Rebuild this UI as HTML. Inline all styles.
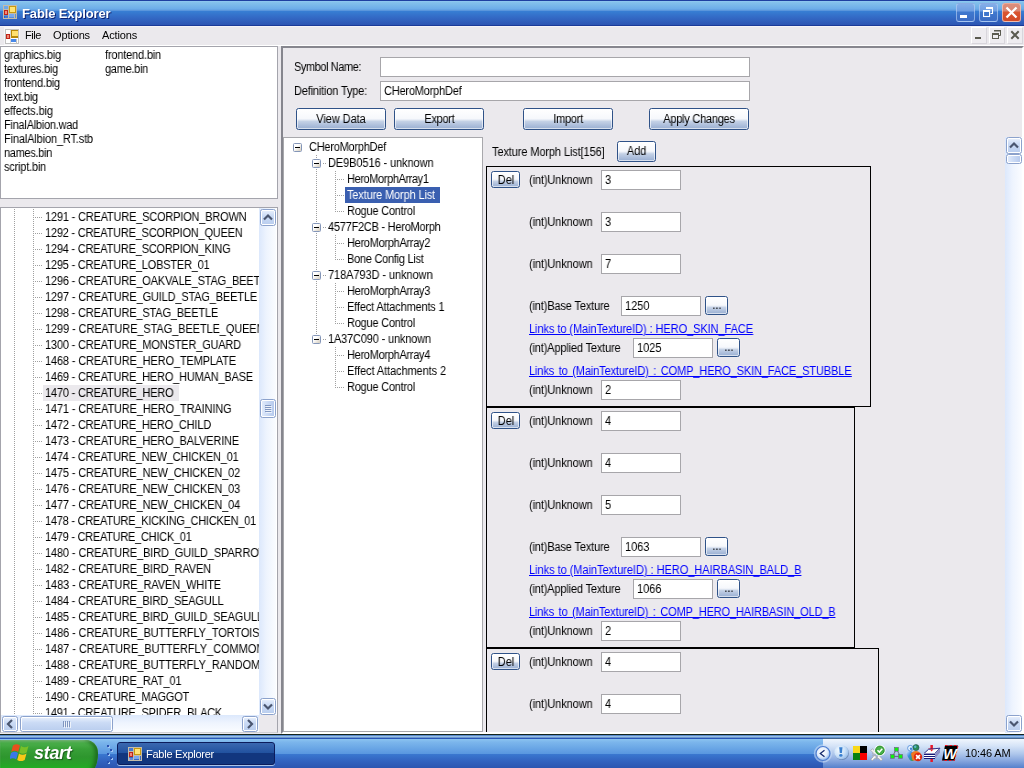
<!DOCTYPE html>
<html lang="en"><head><meta charset="utf-8"><title>Fable Explorer</title>
<style>
html,body{margin:0;padding:0}
body{width:1024px;height:768px;overflow:hidden;position:relative;background:#EBE9ED;font:12px "Liberation Sans",sans-serif;color:#000}
div,span,a{box-sizing:border-box}
.abs{position:absolute}
span{white-space:pre}
.s{display:inline-block;transform:scaleX(.9167);transform-origin:0 50%;letter-spacing:-0.22px;will-change:transform}
.s.c{transform-origin:50% 50%}
.t{font-size:11px;transform:none;letter-spacing:0}
#title{position:absolute;left:0;top:0;width:1024px;height:26px;background:linear-gradient(to bottom,#1E3FA0 0,#1E3FA0 1px,#93CBF1 1px,#85C2EC 2px,#6CACE8 9px,#5A96DC 10.5px,#377FD4 11px,#3368C4 18px,#2C55B2 25px,#1A3A98 25px,#1A3A98 26px)}
#title .cap{position:absolute;left:22px;top:1px;height:26px;font:bold 13px/26px "Liberation Sans",sans-serif;color:#fff;text-shadow:1px 1px 0 #0A1E6E;letter-spacing:0;transform:none;will-change:transform}
.tb{position:absolute;top:3px;width:19px;height:19px;border-radius:3px;border:1px solid rgba(190,214,246,.6);background:linear-gradient(to bottom,#84AEE8 0,#6E9EE2 7px,#3F78CE 8px,#3C6CC4 100%)}
.tb.close{background:linear-gradient(to bottom,#DC8E7C 0,#D98672 7px,#DA5530 8px,#D24A26 100%);border-color:rgba(246,206,196,.7)}
.tb svg,.mb svg{position:absolute;left:0;top:0}
#menu{position:absolute;left:0;top:26px;width:1024px;height:20px;background:#EBE9ED;border-top:1px solid #F5F3F7;border-bottom:1px solid #fff}
#menu span{position:absolute;top:-1px;height:18px;line-height:18px}
.mb{position:absolute;top:27px;width:16px;height:17px;border:1px solid #fff;border-right-color:#D8D6DC;border-bottom-color:#D8D6DC;background:#EEECF0}
#lv{position:absolute;left:0;top:46px;width:278px;height:153px;background:#fff;border:1px solid #A4A4AC}
#lv span{position:absolute;height:14px;line-height:14px}
#tv{position:absolute;left:0;top:207px;width:278px;height:526px;background:#fff;border:1px solid #A4A4AC;border-bottom-color:#D0D0D4;overflow:hidden}
.row{position:absolute;left:44px;height:16px;line-height:16px}
.hd{position:absolute;height:1px;background-image:linear-gradient(to right,#A0A0A0 50%,transparent 50%);background-size:2px 1px}
.vd{position:absolute;width:1px;background-image:linear-gradient(to bottom,#A0A0A0 50%,transparent 50%);background-size:1px 2px}
.sbv{position:absolute;background:linear-gradient(to right,#DCE8FC 0,#EEF4FE 45%,#FAFCFF 100%)}
.sbh{position:absolute;background:linear-gradient(to bottom,#DCE8FC 0,#EEF4FE 45%,#FAFCFF 100%)}
.sbb{position:absolute;border:1px solid #8CA2CC;border-radius:2.5px;background:linear-gradient(to bottom,#EAF1FD 0,#CBDBF5 40%,#B9CDEE 100%);box-shadow:inset 0 0 0 1px #fff}
.sbb.v{background:linear-gradient(to right,#E4EDFC 0,#C9D9F4 50%,#B4C8EC 100%)}
.sbb svg{position:absolute;left:0;top:0}
#mdi{position:absolute;left:281px;top:46px;width:743px;height:688px;border-left:2px solid #86868E;border-top:2px solid #86868E;border-right:2px solid #fff;border-bottom:2px solid #fff;background:#EBE9ED}
.tx{position:absolute;background:#fff;border:1px solid #A7A6AA;height:20px;line-height:18px;padding-left:3px}
.btn{position:absolute;border:1px solid #2F5288;border-radius:2.5px;background:linear-gradient(to bottom,#fff 0,#F6F8FC 48%,#E4EAF4 54%,#C4D1E6 62%,#98AED2 100%);text-align:center;box-shadow:inset 0 0 0 1px rgba(255,255,255,.6), 0 0 1px rgba(255,255,255,.8)}
.lbl{position:absolute;height:16px;line-height:16px}
.lnk{position:absolute;height:16px;line-height:16px;color:#0000FF;text-decoration:underline}
.grp{position:absolute;border:1px solid #000;height:241px}
#t2{position:absolute;left:283px;top:137px;width:200px;height:595px;background:#fff;border:1px solid #A8A8AC}
#t2 span{position:absolute;height:16px;line-height:16px}
.pm{position:absolute;width:9px;height:9px;border:1px solid #8496B8;background:linear-gradient(135deg,#fff 35%,#D4CCBC);border-radius:1.5px}
.pm:after{content:"";position:absolute;left:1px;top:3px;width:5px;height:1px;background:#000}
#task{position:absolute;left:0;top:738px;width:1024px;height:30px;background:linear-gradient(to bottom,#2A55B8 0,#2A55B8 1px,#8CC4F0 1px,#7CB6EC 4px,#5A98E0 15.500px,#3A78D0 16px,#3263C0 23px,#2C55B0 30px)}
</style></head>
<body>
<div id="title">
<svg class="abs" style="left:3px;top:5px" width="14" height="14" viewBox="0 0 14 14"><rect x="0" y="0" width="14" height="14" fill="#C4BCA8"></rect><rect x="1" y="1" width="12" height="12" fill="#5A8FD8"></rect><rect x="1" y="1" width="4" height="3" fill="#6FA8E8"></rect><rect x="1" y="5" width="4" height="5" fill="#C02418"></rect><rect x="2" y="6" width="2" height="3" fill="#F08878"></rect><rect x="6" y="1" width="7" height="7" fill="#C89A10"></rect><rect x="7" y="2" width="5" height="5" fill="#FFE478"></rect><rect x="5" y="0" width="1" height="14" fill="#C4BCA8"></rect><rect x="0" y="4" width="5" height="1" fill="#C4BCA8"></rect><rect x="6" y="9" width="5" height="3" fill="#78A8F0"></rect><rect x="5" y="8" width="9" height="1" fill="#C4BCA8"></rect><rect x="11" y="9" width="1" height="4" fill="#C4BCA8"></rect><rect x="1" y="11" width="1.500" height="2" fill="#2860C8"></rect><rect x="3.500" y="11" width="1" height="2" fill="#2860C8"></rect></svg>
<span class="cap" style="letter-spacing: -0.129px;">Fable Explorer</span>
<div class="tb" style="left:956px"><svg width="17" height="17"><rect x="3" y="11" width="7" height="3" fill="#fff"></rect></svg></div>
<div class="tb" style="left:979px"><svg width="17" height="17"><path d="M12.500 4v5.500h-2" fill="none" stroke="#fff" stroke-width="1.100"></path><rect x="6" y="3" width="7" height="2" fill="#fff"></rect><rect x="3.550" y="7" width="6" height="5.500" fill="none" stroke="#fff" stroke-width="1.100"></rect><rect x="3" y="6" width="7.100" height="2" fill="#fff"></rect></svg></div>
<div class="tb close" style="left:1002px"><svg width="17" height="17"><path d="M3.500 3.500l10 10M13.500 3.500l-10 10" stroke="#fff" stroke-width="2.300"></path></svg></div>
</div>
<div id="menu">
<div class="abs" style="left:4px;top:0;width:16px;height:18px;background:#F6F5F8"></div>
<svg class="abs" style="left:5px;top:2px" width="14" height="15" viewBox="0 0 14 15"><rect x="0" y="0" width="14" height="15" fill="#C0C0C0"></rect><rect x="1" y="1" width="12" height="13" fill="#fff"></rect><rect x="1" y="5" width="4" height="5" fill="#C02418"></rect><rect x="2" y="6" width="2" height="3" fill="#F08878"></rect><rect x="6" y="1" width="7" height="8" fill="#B88808"></rect><rect x="7" y="2" width="6" height="5" fill="#FFE070"></rect><rect x="6" y="10" width="5" height="3" fill="#4888E8"></rect><rect x="5" y="0" width="1" height="15" fill="#C0C0C0" opacity=".6"></rect><rect x="11" y="10" width="1" height="4" fill="#C0C0C0"></rect></svg>
<span class="s t" style="left: 25px; letter-spacing: -0.434px;">File</span>
<span class="s t" style="left: 53px; letter-spacing: -0.132px;">Options</span>
<span class="s t" style="left: 102px; letter-spacing: -0.154px;">Actions</span>
</div>
<div class="mb" style="left:971px"><svg width="14" height="15"><rect x="3" y="9" width="6" height="2" fill="#5A5A50"></rect></svg></div>
<div class="mb" style="left:989px"><svg width="14" height="15"><path d="M10.500 2.500v5h-2" fill="none" stroke="#5A5A50" stroke-width="1"></path><rect x="4" y="2" width="7" height="1.500" fill="#5A5A50"></rect><rect x="2.500" y="5.500" width="6" height="5" fill="none" stroke="#5A5A50" stroke-width="1"></rect><rect x="2" y="5" width="7" height="2" fill="#5A5A50"></rect></svg></div>
<div class="mb" style="left:1007px"><svg width="14" height="15"><path d="M3.300 3.300l7.400 7.400M10.700 3.300l-7.400 7.400" stroke="#5A5A50" stroke-width="2"></path></svg></div>
<div id="lv">
<span class="s" style="left: 3px; top: 1px; letter-spacing: -0.212px;">graphics.big</span>
<span class="s" style="left: 3px; top: 15px; letter-spacing: -0.262px;">textures.big</span>
<span class="s" style="left: 3px; top: 29px; letter-spacing: -0.192px;">frontend.big</span>
<span class="s" style="left: 3px; top: 43px; letter-spacing: -0.202px;">text.big</span>
<span class="s" style="left: 3px; top: 57px; letter-spacing: -0.094px;">effects.big</span>
<span class="s" style="left: 3px; top: 71px; letter-spacing: -0.266px;">FinalAlbion.wad</span>
<span class="s" style="left: 3px; top: 85px; letter-spacing: -0.153px;">FinalAlbion_RT.stb</span>
<span class="s" style="left: 3px; top: 99px; letter-spacing: -0.335px;">names.bin</span>
<span class="s" style="left: 3px; top: 113px; letter-spacing: -0.221px;">script.bin</span>
<span class="s" style="left: 104px; top: 1px; letter-spacing: -0.192px;">frontend.bin</span>
<span class="s" style="left: 104px; top: 15px; letter-spacing: -0.308px;">game.bin</span>
</div>
<div id="tv">
<div class="abs" style="left:0;top:0;width:258px;height:507px;overflow:hidden">
<div class="vd" style="left:13px;top:1px;height:506px"></div>
<div class="vd" style="left:32px;top:1px;height:506px"></div>
<div class="abs" style="left:42px;top:177px;width:136px;height:16px;background:#EBE9ED"></div>
<div class="hd" style="left:34px;top:9px;width:8px"></div>
<span class="s row" style="top: 1px; letter-spacing: -0.201px;">1291 - CREATURE_SCORPION_BROWN</span>
<div class="hd" style="left:34px;top:25px;width:8px"></div>
<span class="s row" style="top: 17px; letter-spacing: -0.236px;">1292 - CREATURE_SCORPION_QUEEN</span>
<div class="hd" style="left:34px;top:41px;width:8px"></div>
<span class="s row" style="top: 33px; letter-spacing: -0.235px;">1294 - CREATURE_SCORPION_KING</span>
<div class="hd" style="left:34px;top:57px;width:8px"></div>
<span class="s row" style="top: 49px; letter-spacing: -0.221px;">1295 - CREATURE_LOBSTER_01</span>
<div class="hd" style="left:34px;top:73px;width:8px"></div>
<span class="s row" style="top: 65px; letter-spacing: -0.189px;">1296 - CREATURE_OAKVALE_STAG_BEETLE</span>
<div class="hd" style="left:34px;top:89px;width:8px"></div>
<span class="s row" style="top: 81px; letter-spacing: -0.173px;">1297 - CREATURE_GUILD_STAG_BEETLE</span>
<div class="hd" style="left:34px;top:105px;width:8px"></div>
<span class="s row" style="top: 97px; letter-spacing: -0.182px;">1298 - CREATURE_STAG_BEETLE</span>
<div class="hd" style="left:34px;top:121px;width:8px"></div>
<span class="s row" style="top: 113px; letter-spacing: -0.112px;">1299 - CREATURE_STAG_BEETLE_QUEEN</span>
<div class="hd" style="left:34px;top:137px;width:8px"></div>
<span class="s row" style="top: 129px; letter-spacing: -0.185px;">1300 - CREATURE_MONSTER_GUARD</span>
<div class="hd" style="left:34px;top:153px;width:8px"></div>
<span class="s row" style="top: 145px; letter-spacing: -0.159px;">1468 - CREATURE_HERO_TEMPLATE</span>
<div class="hd" style="left:34px;top:169px;width:8px"></div>
<span class="s row" style="top: 161px; letter-spacing: -0.203px;">1469 - CREATURE_HERO_HUMAN_BASE</span>
<div class="hd" style="left:34px;top:185px;width:8px"></div>
<span class="s row" style="top: 177px; letter-spacing: -0.183px;">1470 - CREATURE_HERO</span>
<div class="hd" style="left:34px;top:201px;width:8px"></div>
<span class="s row" style="top: 193px; letter-spacing: -0.151px;">1471 - CREATURE_HERO_TRAINING</span>
<div class="hd" style="left:34px;top:217px;width:8px"></div>
<span class="s row" style="top: 209px; letter-spacing: -0.208px;">1472 - CREATURE_HERO_CHILD</span>
<div class="hd" style="left:34px;top:233px;width:8px"></div>
<span class="s row" style="top: 225px; letter-spacing: -0.178px;">1473 - CREATURE_HERO_BALVERINE</span>
<div class="hd" style="left:34px;top:249px;width:8px"></div>
<span class="s row" style="top: 241px; letter-spacing: -0.226px;">1474 - CREATURE_NEW_CHICKEN_01</span>
<div class="hd" style="left:34px;top:265px;width:8px"></div>
<span class="s row" style="top: 257px; letter-spacing: -0.171px;">1475 - CREATURE_NEW_CHICKEN_02</span>
<div class="hd" style="left:34px;top:281px;width:8px"></div>
<span class="s row" style="top: 273px; letter-spacing: -0.171px;">1476 - CREATURE_NEW_CHICKEN_03</span>
<div class="hd" style="left:34px;top:297px;width:8px"></div>
<span class="s row" style="top: 289px; letter-spacing: -0.171px;">1477 - CREATURE_NEW_CHICKEN_04</span>
<div class="hd" style="left:34px;top:313px;width:8px"></div>
<span class="s row" style="top: 305px; letter-spacing: -0.266px;">1478 - CREATURE_KICKING_CHICKEN_01</span>
<div class="hd" style="left:34px;top:329px;width:8px"></div>
<span class="s row" style="top: 321px; letter-spacing: -0.279px;">1479 - CREATURE_CHICK_01</span>
<div class="hd" style="left:34px;top:345px;width:8px"></div>
<span class="s row" style="top: 337px; letter-spacing: -0.137px;">1480 - CREATURE_BIRD_GUILD_SPARROW</span>
<div class="hd" style="left:34px;top:361px;width:8px"></div>
<span class="s row" style="top: 353px; letter-spacing: -0.149px;">1482 - CREATURE_BIRD_RAVEN</span>
<div class="hd" style="left:34px;top:377px;width:8px"></div>
<span class="s row" style="top: 369px; letter-spacing: -0.109px;">1483 - CREATURE_RAVEN_WHITE</span>
<div class="hd" style="left:34px;top:393px;width:8px"></div>
<span class="s row" style="top: 385px; letter-spacing: -0.184px;">1484 - CREATURE_BIRD_SEAGULL</span>
<div class="hd" style="left:34px;top:409px;width:8px"></div>
<span class="s row" style="top: 401px; letter-spacing: -0.16px;">1485 - CREATURE_BIRD_GUILD_SEAGULL</span>
<div class="hd" style="left:34px;top:425px;width:8px"></div>
<span class="s row" style="top: 417px; letter-spacing: -0.11px;">1486 - CREATURE_BUTTERFLY_TORTOISESHELL</span>
<div class="hd" style="left:34px;top:441px;width:8px"></div>
<span class="s row" style="top: 433px; letter-spacing: -0.06px;">1487 - CREATURE_BUTTERFLY_COMMON_BLUE</span>
<div class="hd" style="left:34px;top:457px;width:8px"></div>
<span class="s row" style="top: 449px; letter-spacing: -0.117px;">1488 - CREATURE_BUTTERFLY_RANDOM</span>
<div class="hd" style="left:34px;top:473px;width:8px"></div>
<span class="s row" style="top: 465px; letter-spacing: -0.154px;">1489 - CREATURE_RAT_01</span>
<div class="hd" style="left:34px;top:489px;width:8px"></div>
<span class="s row" style="top: 481px; letter-spacing: -0.245px;">1490 - CREATURE_MAGGOT</span>
<div class="hd" style="left:34px;top:505px;width:8px"></div>
<span class="s row" style="top: 497px; letter-spacing: -0.242px;">1491 - CREATURE_SPIDER_BLACK</span>
</div>
<div class="sbv" style="left:258px;top:0;width:17px;height:507px"></div>
<div class="sbb" style="left:259px;top:1px;width:16px;height:17px"><svg width="14" height="15"><path d="M3.0 9.5l4-4 4 4" fill="none" stroke="#4A5670" stroke-width="2.200"></path></svg></div>
<div class="sbb" style="left:259px;top:490px;width:16px;height:17px"><svg width="14" height="15"><path d="M3.0 5.5l4 4 4-4" fill="none" stroke="#4A5670" stroke-width="2.200"></path></svg></div>
<div class="sbb v" style="left:259px;top:191px;width:16px;height:19px"><svg width="14" height="17"><path d="M4 5.500h6M4 7.500h6M4 9.500h6M4 11.500h6" stroke="#8096C0" stroke-width="1"></path><path d="M5 6.500h6M5 8.500h6M5 10.500h6M5 12.500h6" stroke="#fff" stroke-width="1" opacity=".7"></path></svg></div>
<div class="sbh" style="left:0;top:507px;width:258px;height:17px"></div>
<div class="sbb" style="left:1px;top:508px;width:16px;height:16px"><svg width="14" height="14"><path d="M9.0 3.0l-4 4 4 4" fill="none" stroke="#4A5670" stroke-width="2.200"></path></svg></div>
<div class="sbb" style="left:241px;top:508px;width:16px;height:16px"><svg width="14" height="14"><path d="M5.0 3.0l4 4-4 4" fill="none" stroke="#4A5670" stroke-width="2.200"></path></svg></div>
<div class="sbb" style="left:19px;top:508px;width:93px;height:16px"><svg width="91" height="14"><path d="M42.500 4v6M44.500 4v6M46.500 4v6M48.500 4v6" stroke="#8096C0" stroke-width="1"></path><path d="M43.500 5v6M45.500 5v6M47.500 5v6M49.500 5v6" stroke="#fff" stroke-width="1" opacity=".7"></path></svg></div>
<div class="abs" style="left:258px;top:507px;width:18px;height:18px;background:#EBE9ED"></div>
</div>
<div id="mdi"></div>
<span class="s lbl" style="left: 294px; top: 59px; letter-spacing: -0.468px;">Symbol Name:</span>
<span class="s lbl" style="left: 294px; top: 83px; letter-spacing: -0.179px;">Definition Type:</span>
<div class="tx" style="left:380px;top:57px;width:370px"></div>
<div class="tx" style="left:380px;top:81px;width:370px"><span class="s" style="letter-spacing: -0.218px;">CHeroMorphDef</span></div>
<div class="btn" style="left:296px;top:108px;width:90px;height:22px;line-height:20px"><span class="s c" style="letter-spacing: -0.054px;">View Data</span></div>
<div class="btn" style="left:394px;top:108px;width:90px;height:22px;line-height:20px"><span class="s c" style="letter-spacing: -0.327px;">Export</span></div>
<div class="btn" style="left:523px;top:108px;width:90px;height:22px;line-height:20px"><span class="s c" style="letter-spacing: -0.306px;">Import</span></div>
<div class="btn" style="left:649px;top:108px;width:100px;height:22px;line-height:20px"><span class="s c" style="letter-spacing: -0.261px;">Apply Changes</span></div>
<div id="t2">
<div class="vd" style="left:32px;top:17px;height:185px"></div>
<div class="abs" style="left:61px;top:49px;width:95px;height:16px;background:#3A5FB0"></div>
<div class="pm" style="left:9px;top:5px"></div>
<span class="s" style="left: 25px; top: 1px; letter-spacing: -0.26px;">CHeroMorphDef</span>
<div class="hd" style="left:39px;top:25px;width:4px"></div>
<div class="pm" style="left:28px;top:21px"></div>
<span class="s" style="left: 44px; top: 17px; letter-spacing: -0.092px;">DE9B0516 - unknown</span>
<div class="hd" style="left:53px;top:41px;width:8px"></div>
<span class="s" style="left: 63px; top: 33px; letter-spacing: -0.431px;">HeroMorphArray1</span>
<div class="hd" style="left:53px;top:57px;width:8px"></div>
<span class="s" style="left: 63px; top: 49px; color: rgb(255, 255, 255); letter-spacing: -0.151px;">Texture Morph List</span>
<div class="hd" style="left:53px;top:73px;width:8px"></div>
<span class="s" style="left: 63px; top: 65px; letter-spacing: -0.247px;">Rogue Control</span>
<div class="hd" style="left:39px;top:89px;width:4px"></div>
<div class="pm" style="left:28px;top:85px"></div>
<span class="s" style="left: 44px; top: 81px; letter-spacing: -0.267px;">4577F2CB - HeroMorph</span>
<div class="hd" style="left:53px;top:105px;width:8px"></div>
<span class="s" style="left: 63px; top: 97px; letter-spacing: -0.322px;">HeroMorphArray2</span>
<div class="hd" style="left:53px;top:121px;width:8px"></div>
<span class="s" style="left: 63px; top: 113px; letter-spacing: -0.288px;">Bone Config List</span>
<div class="hd" style="left:39px;top:137px;width:4px"></div>
<div class="pm" style="left:28px;top:133px"></div>
<span class="s" style="left: 44px; top: 129px; letter-spacing: -0.079px;">718A793D - unknown</span>
<div class="hd" style="left:53px;top:153px;width:8px"></div>
<span class="s" style="left: 63px; top: 145px; letter-spacing: -0.322px;">HeroMorphArray3</span>
<div class="hd" style="left:53px;top:169px;width:8px"></div>
<span class="s" style="left: 63px; top: 161px; letter-spacing: -0.174px;">Effect Attachments 1</span>
<div class="hd" style="left:53px;top:185px;width:8px"></div>
<span class="s" style="left: 63px; top: 177px; letter-spacing: -0.247px;">Rogue Control</span>
<div class="hd" style="left:39px;top:201px;width:4px"></div>
<div class="pm" style="left:28px;top:197px"></div>
<span class="s" style="left: 44px; top: 193px; letter-spacing: -0.17px;">1A37C090 - unknown</span>
<div class="hd" style="left:53px;top:217px;width:8px"></div>
<span class="s" style="left: 63px; top: 209px; letter-spacing: -0.322px;">HeroMorphArray4</span>
<div class="hd" style="left:53px;top:233px;width:8px"></div>
<span class="s" style="left: 63px; top: 225px; letter-spacing: -0.092px;">Effect Attachments 2</span>
<div class="hd" style="left:53px;top:249px;width:8px"></div>
<span class="s" style="left: 63px; top: 241px; letter-spacing: -0.247px;">Rogue Control</span>
<div class="vd" style="left:51px;top:33px;height:41px"></div>
<div class="vd" style="left:51px;top:97px;height:25px"></div>
<div class="vd" style="left:51px;top:145px;height:41px"></div>
<div class="vd" style="left:51px;top:209px;height:41px"></div>
</div>
<span class="s lbl" style="left: 492px; top: 144px; letter-spacing: -0.117px;">Texture Morph List[156]</span>
<div class="btn" style="left:617px;top:141px;width:39px;height:21px;line-height:19px"><span class="s c" style="letter-spacing: -0.029px;">Add</span></div>
<div class="abs" style="left:484px;top:137px;width:522px;height:595px;overflow:hidden">
<div class="grp" style="left:2px;top:29px;width:385px"><div class="btn" style="left:4px;top:4px;width:29px;height:17px;line-height:17px"><span class="s c" style="letter-spacing: -0.005px;">Del</span></div><span class="s lbl" style="left: 42px; top: 5px; letter-spacing: -0.119px;">(int)Unknown</span><div class="tx" style="left:114px;top:3px;width:80px"><span class="s">3</span></div><span class="s lbl" style="left: 42px; top: 47px; letter-spacing: -0.119px;">(int)Unknown</span><div class="tx" style="left:114px;top:45px;width:80px"><span class="s">3</span></div><span class="s lbl" style="left: 42px; top: 89px; letter-spacing: -0.119px;">(int)Unknown</span><div class="tx" style="left:114px;top:87px;width:80px"><span class="s">7</span></div><span class="s lbl" style="left: 42px; top: 131px; letter-spacing: -0.158px;">(int)Base Texture</span><div class="tx" style="left:134px;top:129px;width:80px"><span class="s" style="letter-spacing: 0.006px;">1250</span></div><div class="btn" style="left:218px;top:129px;width:23px;height:19px;line-height:16px"><span class="s c" style="letter-spacing: -0.066px;">...</span></div><span class="s lnk" style="left: 42px; top: 154px; letter-spacing: -0.075px;">Links to (MainTextureID) : HERO_SKIN_FACE</span><span class="s lbl" style="left: 42px; top: 173px; letter-spacing: -0.168px;">(int)Applied Texture</span><div class="tx" style="left:146px;top:171px;width:80px"><span class="s" style="letter-spacing: 0.006px;">1025</span></div><div class="btn" style="left:230px;top:171px;width:23px;height:19px;line-height:16px"><span class="s c" style="letter-spacing: -0.066px;">...</span></div><span class="s lnk" style="left: 42px; top: 196px; word-spacing: 1.8px; letter-spacing: -0.127px;">Links to (MainTextureID) : COMP_HERO_SKIN_FACE_STUBBLE</span><span class="s lbl" style="left: 42px; top: 215px; letter-spacing: -0.119px;">(int)Unknown</span><div class="tx" style="left:114px;top:213px;width:80px"><span class="s">2</span></div></div>
<div class="grp" style="left:2px;top:270px;width:369px"><div class="btn" style="left:4px;top:4px;width:29px;height:17px;line-height:17px"><span class="s c" style="letter-spacing: -0.005px;">Del</span></div><span class="s lbl" style="left: 42px; top: 5px; letter-spacing: -0.119px;">(int)Unknown</span><div class="tx" style="left:114px;top:3px;width:80px"><span class="s">4</span></div><span class="s lbl" style="left: 42px; top: 47px; letter-spacing: -0.119px;">(int)Unknown</span><div class="tx" style="left:114px;top:45px;width:80px"><span class="s">4</span></div><span class="s lbl" style="left: 42px; top: 89px; letter-spacing: -0.119px;">(int)Unknown</span><div class="tx" style="left:114px;top:87px;width:80px"><span class="s">5</span></div><span class="s lbl" style="left: 42px; top: 131px; letter-spacing: -0.158px;">(int)Base Texture</span><div class="tx" style="left:134px;top:129px;width:80px"><span class="s" style="letter-spacing: 0.006px;">1063</span></div><div class="btn" style="left:218px;top:129px;width:23px;height:19px;line-height:16px"><span class="s c" style="letter-spacing: -0.066px;">...</span></div><span class="s lnk" style="left: 42px; top: 154px; letter-spacing: -0.032px;">Links to (MainTextureID) : HERO_HAIRBASIN_BALD_B</span><span class="s lbl" style="left: 42px; top: 173px; letter-spacing: -0.168px;">(int)Applied Texture</span><div class="tx" style="left:146px;top:171px;width:80px"><span class="s" style="letter-spacing: 0.006px;">1066</span></div><div class="btn" style="left:230px;top:171px;width:23px;height:19px;line-height:16px"><span class="s c" style="letter-spacing: -0.066px;">...</span></div><span class="s lnk" style="left: 42px; top: 196px; word-spacing: 1.8px; letter-spacing: -0.147px;">Links to (MainTextureID) : COMP_HERO_HAIRBASIN_OLD_B</span><span class="s lbl" style="left: 42px; top: 215px; letter-spacing: -0.119px;">(int)Unknown</span><div class="tx" style="left:114px;top:213px;width:80px"><span class="s">2</span></div></div>
<div class="grp" style="left:2px;top:511px;width:393px"><div class="btn" style="left:4px;top:4px;width:29px;height:17px;line-height:17px"><span class="s c" style="letter-spacing: -0.005px;">Del</span></div><span class="s lbl" style="left: 42px; top: 5px; letter-spacing: -0.119px;">(int)Unknown</span><div class="tx" style="left:114px;top:3px;width:80px"><span class="s">4</span></div><span class="s lbl" style="left: 42px; top: 47px; letter-spacing: -0.119px;">(int)Unknown</span><div class="tx" style="left:114px;top:45px;width:80px"><span class="s">4</span></div><span class="s lbl" style="left: 42px; top: 89px; letter-spacing: -0.119px;">(int)Unknown</span><div class="tx" style="left:114px;top:87px;width:80px"><span class="s"></span></div></div>
</div>
<div class="sbv" style="left:1005px;top:137px;width:17px;height:596px"></div>
<div class="sbb" style="left:1006px;top:137px;width:16px;height:17px"><svg width="14" height="15"><path d="M3.0 9.5l4-4 4 4" fill="none" stroke="#4A5670" stroke-width="2.200"></path></svg></div>
<div class="sbb v" style="left:1006px;top:154px;width:16px;height:10px"></div>
<div class="sbb" style="left:1006px;top:715px;width:16px;height:17px"><svg width="14" height="15"><path d="M3.0 5.5l4 4 4-4" fill="none" stroke="#4A5670" stroke-width="2.200"></path></svg></div>
<div class="abs" style="left:0;top:734px;width:1024px;height:4px;background:linear-gradient(to bottom,#14241C 0,#14241C 1px,#5A8CCC 1px,#5A8CCC 2px,#9ABEE6 2px,#9ABEE6 3px,#6A9AD0 3px,#6A9AD0 4px)"></div>
<div id="task">
<div class="abs" style="left:0;top:2px;width:98px;height:36px;border-radius:0 12px 14px 0 / 0 13px 22px 0;background:linear-gradient(to bottom,#8AD48A 0,#4CB04C 3px,#38A038 9px,#2E962E 17px,#28A228 24px,#20B020 29px,#20B020 100%);box-shadow:inset -3px 0 4px #1C6A1C, inset 0 1px 1px #A8E0A8"></div>
<span class="abs" style="left:34px;top:4px;font:italic bold 18px/22px 'Liberation Sans',sans-serif;color:#fff;text-shadow:1px 1px 1px #1A5A1A;letter-spacing:-0.3px;will-change:transform">start</span>
<svg class="abs" style="left:10px;top:5px" width="20" height="18" viewBox="0 0 20 18"><path d="M3 2.500q3.500-2.500 7 0l-1.800 6.500q-3.500-2.500-7 0z" fill="#E8501C"></path><path d="M11 3q3.500 2.500 7.500 0l-1.800 6.500q-4 2.500-7.500 0z" fill="#78C028"></path><path d="M1 10q3.500-2.500 7 0l-1.800 6.500q-3.500-2.500-7 0z" fill="#3A78E8"></path><path d="M9 10.500q3.500 2.500 7.500 0l-1.800 6.500q-4 2.500-7.500 0z" fill="#F8C818"></path></svg>
<div class="abs" style="left:117px;top:4px;width:158px;height:23px;border-radius:3px;background:linear-gradient(to bottom,#3A68B0 0,#20509E 50%,#12367E 50%,#12367E 100%);border:1px solid #0C1C5C;box-shadow:0 1px 0 #A8C4E8"></div>
<svg class="abs" style="left:128px;top:9px" width="14" height="14" viewBox="0 0 14 14"><rect x="0" y="0" width="14" height="14" fill="#C4BCA8"></rect><rect x="1" y="1" width="12" height="12" fill="#3A68C0"></rect><rect x="1" y="1" width="4" height="3" fill="#4878D0"></rect><rect x="1" y="5" width="4" height="5" fill="#C02418"></rect><rect x="2" y="6" width="2" height="3" fill="#F08878"></rect><rect x="6" y="1" width="7" height="7" fill="#C89A10"></rect><rect x="7" y="2" width="5" height="5" fill="#FFE478"></rect><rect x="5" y="0" width="1" height="14" fill="#C4BCA8"></rect><rect x="0" y="4" width="5" height="1" fill="#C4BCA8"></rect><rect x="6" y="9" width="5" height="3" fill="#78A8F0"></rect><rect x="5" y="8" width="9" height="1" fill="#C4BCA8"></rect><rect x="11" y="9" width="1" height="4" fill="#C4BCA8"></rect><rect x="1" y="11" width="1.500" height="2" fill="#88A8E8"></rect><rect x="3.500" y="11" width="1" height="2" fill="#88A8E8"></rect></svg>
<span class="s t" style="position: absolute; left: 146px; top: 8px; height: 16px; line-height: 16px; color: rgb(255, 255, 255); letter-spacing: -0.253px;">Fable Explorer</span>
<div class="abs" style="left:107px;top:7px;width:2px;height:2px;background:#2A52B0;box-shadow:1px 1px 0 #A0C4F4"></div>
<div class="abs" style="left:110px;top:11px;width:2px;height:2px;background:#2A52B0;box-shadow:1px 1px 0 #A0C4F4"></div>
<div class="abs" style="left:107px;top:15px;width:2px;height:2px;background:#2A52B0;box-shadow:1px 1px 0 #A0C4F4"></div>
<div class="abs" style="left:110px;top:19px;width:2px;height:2px;background:#2A52B0;box-shadow:1px 1px 0 #A0C4F4"></div>
<div class="abs" style="left:107px;top:23px;width:2px;height:2px;background:#2A52B0;box-shadow:1px 1px 0 #A0C4F4"></div>
<div class="abs" style="left:823px;top:1px;width:201px;height:29px;background:linear-gradient(to bottom,#F0F6FD 0,#D4E3F7 25%,#B0C8EC 50%,#86A6DE 75%,#5580CC 100%)"></div>
<svg class="abs" style="left:812px;top:4px" width="150" height="24" viewBox="0 0 150 24"><defs><radialGradient id="g1" cx="45%" cy="40%" r="60%"><stop offset="0" stop-color="#fff"></stop><stop offset=".6" stop-color="#E4EEFC"></stop><stop offset="1" stop-color="#88B0E8"></stop></radialGradient><radialGradient id="g2" cx="35%" cy="35%" r="75%"><stop offset="0" stop-color="#F4FAFF"></stop><stop offset=".55" stop-color="#CCE2F8"></stop><stop offset="1" stop-color="#90B8E8"></stop></radialGradient><linearGradient id="g3" x1="0" y1="0" x2="1" y2="1"><stop offset="0" stop-color="#F4F8FF"></stop><stop offset=".45" stop-color="#3C8CE0"></stop><stop offset="1" stop-color="#28A048"></stop></linearGradient></defs><circle cx="11" cy="11.5" r="9.200" fill="#C8DCF6" opacity=".6"></circle><circle cx="11" cy="11.5" r="7" fill="url(#g1)" stroke="#4C7CD0" stroke-width="1.200"></circle><path d="M12.5 8.2L8.3 11.5L12.5 14.8" fill="none" stroke="#14286C" stroke-width="1.300"></path><circle cx="30" cy="11" r="7" fill="#4A6890" opacity=".55"></circle><circle cx="29.4" cy="10.3" r="7" fill="url(#g2)"></circle><path d="M27.2 5.2h3.300l-.6 5.800h-2.100z" fill="#3A80D0"></path><ellipse cx="28.85" cy="13.4" rx="1.700" ry="1.400" fill="#3A80D0"></ellipse><rect x="41" y="4" width="7" height="7" fill="#F8D818"></rect><rect x="48" y="4" width="7" height="7" fill="#000"></rect><rect x="41" y="11" width="7" height="7" fill="#088010"></rect><rect x="48" y="11" width="7" height="7" fill="#F80000"></rect><path d="M64.0 12.0l-3.6 0 l1 -1 l-2.6 -2.6 l1.6 -1.6 l2.6 2.6 l1 -1z" fill="#F4F4F4" stroke="#9C9CA0" stroke-width=".7"></path><path d="M64.0 13.6l-3.6 0 l1 1 l-2.6 2.6 l1.6 1.6 l2.6 -2.6 l1 1z" fill="#F4F4F4" stroke="#9C9CA0" stroke-width=".7"></path><path d="M65.4 13.6l3.6 0 l-1 1 l2.6 2.6 l-1.6 1.6 l-2.6 -2.6 l-1 1z" fill="#F4F4F4" stroke="#9C9CA0" stroke-width=".7"></path><circle cx="67.9" cy="8.4" r="5.600" fill="#fff"></circle><circle cx="67.9" cy="8.4" r="4.300" fill="#48B048" stroke="#2A902A" stroke-width="1"></circle><path d="M65.5 8.3l1.800 1.800 3-3.300" fill="none" stroke="#fff" stroke-width="1.500"></path><path d="M84.5 7.3L80.4 14.4H88.5z" fill="none" stroke="#686878" stroke-width="1"></path><rect x="82.5" y="5.4" width="3.900" height="3.800" fill="#10F010" stroke="#705888" stroke-width=".6"></rect><rect x="78.5" y="12.5" width="3.900" height="3.800" fill="#10F010" stroke="#705888" stroke-width=".6"></rect><rect x="86.6" y="12.5" width="3.900" height="3.800" fill="#10F010" stroke="#705888" stroke-width=".6"></rect><path d="M93.6 11q4-3.500 7.500-.5l.5 8.300q-2.500.8-4-1z" fill="url(#g3)"></path><circle cx="98.4" cy="6.2" r="2.800" fill="#E8F4FF" stroke="#4888D8" stroke-width=".8"></circle><circle cx="99" cy="6.8" r="1.200" fill="#3C80D8"></circle><path d="M99 11.5q4.500-4.500 9.500-.5l-1.500 7.500h-6.500z" fill="#F07820"></path><circle cx="104" cy="5.6" r="3" fill="#2C8C58" stroke="#184C50" stroke-width=".6"></circle><circle cx="103.2" cy="4.8" r="1.200" fill="#58B8D0"></circle><circle cx="106" cy="15" r="4.200" fill="#E02810"></circle><path d="M104.1 13.1l3.800 3.800M107.9 13.1l-3.800 3.800" stroke="#fff" stroke-width="1.600"></path><path d="M118.4 3h2.500v3.500h2.200l-3.500 3.200-3.500-3.200h2.300z" fill="#E81828"></path><path d="M118.4 20h2.500v-3.500h2.200l-3.500-3.200-3.500 3.200h2.300z" fill="#E81828"></path><path d="M112 11.5l4.500-4.200l11.500-1.100l-5.200 5.300z" fill="#fff" stroke="#181878" stroke-width=".9"></path><path d="M118 7.5l1.700 2 1.700-2.200" fill="#E81828"></path><rect x="112" y="11.5" width="10.800" height="4.800" fill="#fff"></rect><path d="M112 12.5h11M112 14.5h11M112 16.5h11" stroke="#181878" stroke-width="1"></path><path d="M123 12l5-5.500v4l-5 6z" fill="#8C8CC4"></path><path d="M133 3.5h13l-3.500 15h-12.500z" fill="#000"></path><path d="M133 3.5h13l-3.500 15h-12.500" fill="none" stroke="#F01020" stroke-width="1" stroke-dasharray="2.500 2"></path><text x="131.2" y="17.3" font-family="Liberation Sans,sans-serif" font-size="15" font-weight="bold" font-style="italic" fill="#fff" textLength="13.500" lengthAdjust="spacingAndGlyphs">W</text></svg>
<div class="abs" style="left:823px;top:0;width:201px;height:1px;background:#4A6890"></div>
<span class="s t" style="position: absolute; left: 965px; top: 7px; height: 16px; line-height: 16px; color: rgb(0, 0, 0); letter-spacing: -0.123px;">10:46 AM</span>
</div>

</body></html>
